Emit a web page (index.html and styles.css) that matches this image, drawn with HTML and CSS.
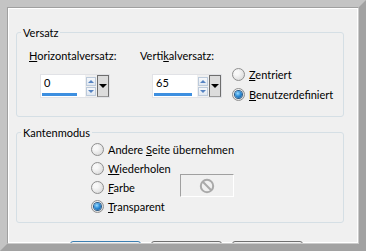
FILE: index.html
```html
<!DOCTYPE html>
<html lang="de">
<head>
  <meta charset="UTF-8" />
  <title>Versatz</title>
  <link rel="stylesheet" href="styles.css">
</head>
<body>

  <div class="frame">
    <div class="dialog">

      <fieldset class="group offset-group">
        <legend>Versatz</legend>
        <div class="offset-row">
          <div class="offset-col first">
            <div class="label"><u>H</u>orizontalversatz:</div>
            <div class="spin">
              <div class="field">
                <span class="value">0</span>
                <span class="bar" style="width:35px"></span>
              </div>
              <div class="arrows">
                <span class="step up"></span>
                <span class="step down"></span>
              </div>
              <div class="drop"></div>
            </div>
          </div>

          <div class="offset-col second">
            <div class="label">Verti<u>k</u>alversatz:</div>
            <div class="spin">
              <div class="field">
                <span class="value">65</span>
                <span class="bar" style="width:38px"></span>
              </div>
              <div class="arrows">
                <span class="step up"></span>
                <span class="step down"></span>
              </div>
              <div class="drop"></div>
            </div>
          </div>

          <div class="radio-col">
            <div class="option"><span class="radio"></span><span><u>Z</u>entriert</span></div>
            <div class="option"><span class="radio on"></span><span><u>B</u>enutzerdefiniert</span></div>
          </div>
        </div>
      </fieldset>

      <fieldset class="group edge-group">
        <legend>Kantenmodus</legend>
        <div class="edge-list">
          <div class="option"><span class="radio"></span><span>Andere <u>S</u>eite übernehmen</span></div>
          <div class="option"><span class="radio"></span><span><u>W</u>iederholen</span></div>
          <div class="color-row">
            <div class="option"><span class="radio"></span><span><u>F</u>arbe</span></div>
            <div class="color-btn">
              <svg width="16" height="16" viewBox="0 0 16 16">
                <circle cx="8" cy="8" r="6.2" fill="none" stroke="#a9a9a9" stroke-width="2"/>
                <line x1="3.8" y1="3.8" x2="12.2" y2="12.2" stroke="#a9a9a9" stroke-width="2"/>
              </svg>
            </div>
          </div>
          <div class="option"><span class="radio on"></span><span><u>T</u>ransparent</span></div>
        </div>
      </fieldset>

      <div class="buttons">
        <button class="btn default" aria-label="OK"></button>
        <button class="btn" aria-label="Abbrechen"></button>
        <button class="btn" aria-label="Hilfe"></button>
      </div>

    </div>
  </div>

</body>
</html>
```
FILE: styles.css
```css
* {
  box-sizing: border-box;
}

body {
  margin: 0;
  font-family: 'Lato', 'Liberation Sans', sans-serif;
  font-size: 11px;
  line-height: 15px;
  color: #000;
  background: #f0f0f0;
  overflow: hidden;
}

u {
  text-decoration: underline;
  text-underline-offset: 1px;
}

/* window frame */
.frame {
  width: 366px;
  height: 251px;
  border: 7px solid;
  border-color: #c4c4c4 #a2a2a2 #a2a2a2 #c4c4c4;
}

.dialog {
  height: 100%;
  background: #f0f0f0;
  border: 1px solid;
  border-color: #a0a0a0 #cbcbcb #cbcbcb #a0a0a0;
  box-shadow: inset 1px 1px #fff, inset -1px -1px #fff;
  padding: 17px 0 0 8px;
  overflow: hidden;
}

/* group boxes */
.group {
  width: 328px;
  margin: 0;
  border: 1px solid #d5dfe5;
  border-radius: 3px;
  min-width: 0;
}

.group legend {
  padding: 0 2px;
  margin-left: 4px;
  line-height: 15px;
}

.offset-group {
  padding: 8px 0 12px 0;
}

.offset-row {
  display: flex;
  padding-left: 12px;
}

.offset-col.first {
  width: 111px;
}

.offset-col.first .spin {
  margin-left: 11px;
}

.offset-col.second {
  width: 92px;
}

.offset-col.second .spin {
  margin-left: 12px;
}

.label {
  height: 15px;
  margin-bottom: 11px;
}

/* spin edit with slider bar */
.spin {
  display: flex;
  width: 70px;
  border: 1px solid #e1e2e6;
}

.field {
  width: 44px;
  height: 22px;
  background: #fff;
  display: flex;
  flex-direction: column;
  padding: 0 0 1px 3px;
}

.value {
  height: 15px;
  margin-bottom: 3px;
}

.bar {
  height: 3px;
  margin-left: -2px;
  background: #3d8fe0;
}

.arrows {
  width: 11px;
  display: flex;
  flex-direction: column;
  gap: 1px;
  padding: 2px 0 1px 1px;
}

.step {
  height: 9px;
  border: 1px solid #bccadb;
  background: linear-gradient(#f6f8fb, #e1e8f1);
  display: flex;
  align-items: center;
  justify-content: center;
}

.step::after {
  content: '';
  border-left: 3px solid transparent;
  border-right: 3px solid transparent;
}

.step.up::after {
  border-bottom: 3px solid #5683c2;
}

.step.down::after {
  border-top: 3px solid #5683c2;
}

.drop {
  width: 12px;
  height: 22px;
  margin-left: 1px;
  border: 1px solid #6e6e6e;
  border-bottom-color: #9a9a9a;
  background: #dcdcdc;
  display: flex;
  align-items: center;
  justify-content: center;
}

.drop::after {
  content: '';
  border-left: 4px solid transparent;
  border-right: 4px solid transparent;
  border-top: 4px solid #000;
}

/* radio buttons */
.radio-col {
  margin-top: 16px;
}

.radio-col .option {
  height: 20px;
}

.option {
  display: flex;
  align-items: center;
  height: 19px;
  white-space: nowrap;
}

.radio {
  flex: none;
  width: 13px;
  height: 13px;
  margin-right: 4px;
  border-radius: 50%;
  border: 1px solid #8f8f8f;
  background: radial-gradient(circle at 35% 35%, #f8f8f8 20%, #d6d6d6 90%);
  display: flex;
  align-items: center;
  justify-content: center;
}

.radio.on::after {
  content: '';
  width: 7px;
  height: 7px;
  border-radius: 50%;
  background: radial-gradient(circle at 40% 35%, #9bdcff 0, #2f8fda 45%, #0b4b8c 100%);
  box-shadow: 0 0 0 1px #2c5b86;
}

.edge-group {
  margin-top: 8px;
  padding: 0 0 6px 0;
}

.edge-list {
  padding-left: 74px;
}

.color-row {
  display: grid;
  grid-template-columns: 89px 54px;
  align-items: start;
}

.color-btn {
  height: 23px;
  margin-top: -4px;
  border: 1px solid;
  border-color: #a0a0a0 #fff #fff #a0a0a0;
  background: #f0f0f0;
  display: flex;
  align-items: center;
  justify-content: center;
}

/* dialog buttons, cut off by the window */
.buttons {
  display: flex;
  gap: 10px;
  margin-top: 18px;
  padding-left: 54px;
}

.btn {
  width: 71px;
  height: 23px;
  border: 1px solid #707070;
  border-radius: 3px;
  background: linear-gradient(#f2f2f2, #dddddd);
  font: inherit;
}

.btn.default {
  border-color: #3c7fb1;
}
```
